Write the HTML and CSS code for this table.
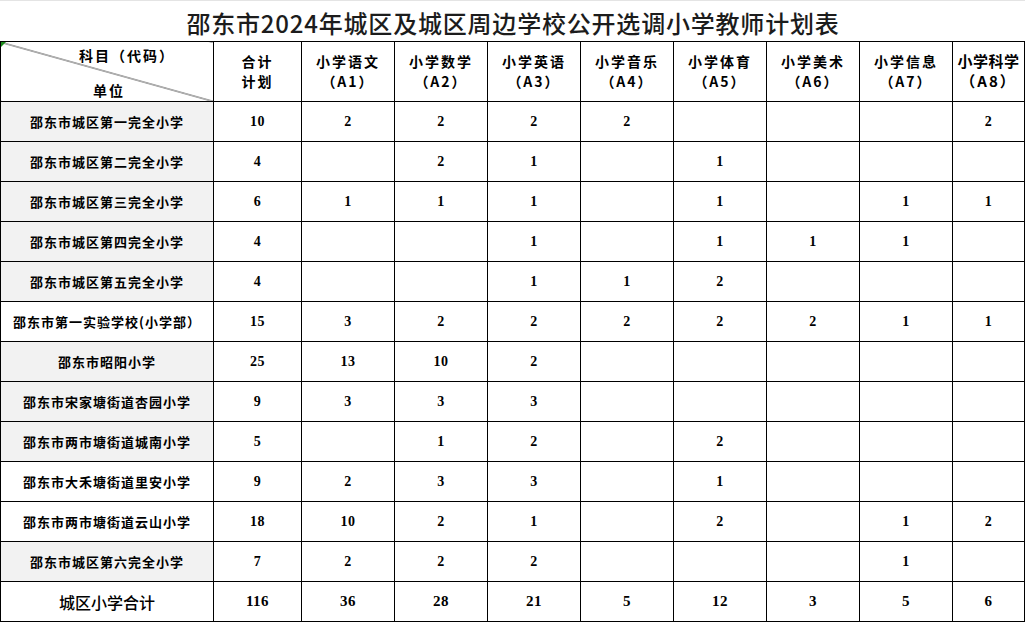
FILE: index.html
```html
<!DOCTYPE html>
<html lang="zh-CN">
<head>
<meta charset="utf-8">
<title>邵东市2024年城区及城区周边学校公开选调小学教师计划表</title>
<link rel="stylesheet" href="styles.css">
</head>
<body>
<div class="sheet">
  <div class="title">邵东市2024年城区及城区周边学校公开选调小学教师计划表</div>
  <table class="plan">
    <colgroup>
      <col class="c-unit"><col class="c-total">
      <col class="c-sub"><col class="c-sub"><col class="c-sub"><col class="c-sub">
      <col class="c-sub"><col class="c-sub"><col class="c-sub"><col class="c-last">
    </colgroup>
    <thead>
      <tr class="head">
        <th class="diag">
          <span class="marker"></span>
          <span class="d-top">科目（代码）</span>
          <span class="d-bot">单位</span>
        </th>
        <th>合计<br>计划</th>
        <th>小学语文<br><span class="code">（A1）</span></th>
        <th>小学数学<br><span class="code">（A2）</span></th>
        <th>小学英语<br><span class="code">（A3）</span></th>
        <th>小学音乐<br><span class="code">（A4）</span></th>
        <th>小学体育<br><span class="code">（A5）</span></th>
        <th>小学美术<br><span class="code">（A6）</span></th>
        <th>小学信息<br><span class="code">（A7）</span></th>
        <th class="last">小学科学<br><span class="code">（A8）</span></th>
      </tr>
    </thead>
    <tbody>
      <tr><td class="unit grey">邵东市城区第一完全小学</td><td>10</td><td>2</td><td>2</td><td>2</td><td>2</td><td></td><td></td><td></td><td>2</td></tr>
      <tr><td class="unit grey">邵东市城区第二完全小学</td><td>4</td><td></td><td>2</td><td>1</td><td></td><td>1</td><td></td><td></td><td></td></tr>
      <tr><td class="unit grey">邵东市城区第三完全小学</td><td>6</td><td>1</td><td>1</td><td>1</td><td></td><td>1</td><td></td><td>1</td><td>1</td></tr>
      <tr><td class="unit grey">邵东市城区第四完全小学</td><td>4</td><td></td><td></td><td>1</td><td></td><td>1</td><td>1</td><td>1</td><td></td></tr>
      <tr><td class="unit grey">邵东市城区第五完全小学</td><td>4</td><td></td><td></td><td>1</td><td>1</td><td>2</td><td></td><td></td><td></td></tr>
      <tr><td class="unit">邵东市第一实验学校(小学部）</td><td>15</td><td>3</td><td>2</td><td>2</td><td>2</td><td>2</td><td>2</td><td>1</td><td>1</td></tr>
      <tr><td class="unit grey">邵东市昭阳小学</td><td>25</td><td>13</td><td>10</td><td>2</td><td></td><td></td><td></td><td></td><td></td></tr>
      <tr><td class="unit grey">邵东市宋家塘街道杏园小学</td><td>9</td><td>3</td><td>3</td><td>3</td><td></td><td></td><td></td><td></td><td></td></tr>
      <tr><td class="unit grey">邵东市两市塘街道城南小学</td><td>5</td><td></td><td>1</td><td>2</td><td></td><td>2</td><td></td><td></td><td></td></tr>
      <tr><td class="unit">邵东市大禾塘街道里安小学</td><td>9</td><td>2</td><td>3</td><td>3</td><td></td><td>1</td><td></td><td></td><td></td></tr>
      <tr><td class="unit">邵东市两市塘街道云山小学</td><td>18</td><td>10</td><td>2</td><td>1</td><td></td><td>2</td><td></td><td>1</td><td>2</td></tr>
      <tr><td class="unit grey">邵东市城区第六完全小学</td><td>7</td><td>2</td><td>2</td><td>2</td><td></td><td></td><td></td><td>1</td><td></td></tr>
      <tr class="sum"><td class="unit">城区小学合计</td><td>116</td><td>36</td><td>28</td><td>21</td><td>5</td><td>12</td><td>3</td><td>5</td><td>6</td></tr>
    </tbody>
  </table>
</div>
</body>
</html>
```
FILE: styles.css
```css
html, body {
  margin: 0;
  padding: 0;
  background: #ffffff;
}

.sheet {
  width: 1025px;
  font-family: "Noto Sans CJK SC", "Noto Sans", sans-serif;
  color: #000;
}

.title {
  height: 41px;
  border-top: 1px solid #e4e4e4;
  box-sizing: border-box;
  display: flex;
  align-items: center;
  justify-content: center;
  font-size: 24px;
  font-weight: 500;
  letter-spacing: 0.8px;
  color: #1c1c1c;
  padding-left: 1px;
  padding-top: 2px;
}

.plan {
  border-collapse: collapse;
  table-layout: fixed;
  width: 1025px;
}

.c-unit { width: 213px; }
.c-total { width: 88px; }
.c-sub { width: 93px; }
.c-last { width: 72px; }

.plan th,
.plan td {
  border: 1px solid #000;
  padding: 0;
  text-align: center;
  vertical-align: middle;
  font-weight: 700;
}

.plan th {
  font-size: 14px;
  letter-spacing: 2px;
  line-height: 20px;
  padding-bottom: 2px;
}

.plan th.last {
  letter-spacing: 0.5px;
  font-size: 15px;
}

.plan th .code {
  letter-spacing: 2px;
}

.plan tr.head { height: 60px; }
.plan tbody tr { height: 40px; }

.plan td {
  font-family: "Liberation Serif", "Noto Sans CJK SC", serif;
  font-size: 14px;
  letter-spacing: 0.5px;
}

.plan td.unit {
  font-family: "Noto Sans CJK SC", sans-serif;
  font-size: 13px;
  letter-spacing: 1px;
}

.plan td.grey { background: #f2f2f2; }

.plan tr.sum td { font-size: 15px; }
.plan tr.sum td.unit {
  font-size: 16px;
  font-weight: 500;
  letter-spacing: 0;
}

.plan th.diag {
  position: relative;
  background: linear-gradient(to top right, transparent calc(50% - 0.8px), #3a3a3a 50%, transparent calc(50% + 0.8px));
  padding: 0;
}

.diag .d-top {
  position: absolute;
  left: 78px;
  top: 3px;
}

.diag .d-bot {
  position: absolute;
  left: 92px;
  top: 38px;
}

.diag .marker {
  position: absolute;
  left: 0;
  top: 0;
  width: 0;
  height: 0;
  border-top: 5px solid #1a8a1a;
  border-right: 5px solid transparent;
}
```
